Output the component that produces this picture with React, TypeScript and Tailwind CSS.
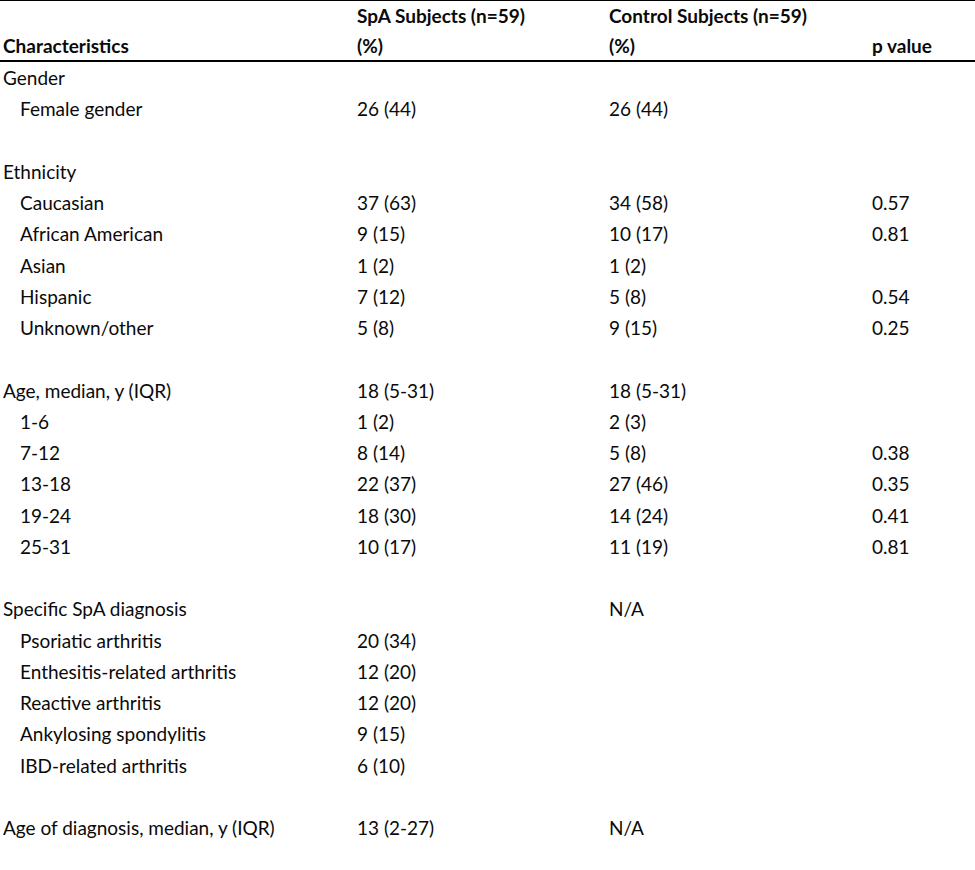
import React from "react";

type Row = { label: string; indent?: boolean; a?: string; b?: string; p?: string } | null;

const rows: Row[] = [
  { label: "Gender" },
  { label: "Female gender", indent: true, a: "26 (44)", b: "26 (44)" },
  null,
  { label: "Ethnicity" },
  { label: "Caucasian", indent: true, a: "37 (63)", b: "34 (58)", p: "0.57" },
  { label: "African American", indent: true, a: "9 (15)", b: "10 (17)", p: "0.81" },
  { label: "Asian", indent: true, a: "1 (2)", b: "1 (2)" },
  { label: "Hispanic", indent: true, a: "7 (12)", b: "5 (8)", p: "0.54" },
  { label: "Unknown/other", indent: true, a: "5 (8)", b: "9 (15)", p: "0.25" },
  null,
  { label: "Age, median, y (IQR)", a: "18 (5-31)", b: "18 (5-31)" },
  { label: "1-6", indent: true, a: "1 (2)", b: "2 (3)" },
  { label: "7-12", indent: true, a: "8 (14)", b: "5 (8)", p: "0.38" },
  { label: "13-18", indent: true, a: "22 (37)", b: "27 (46)", p: "0.35" },
  { label: "19-24", indent: true, a: "18 (30)", b: "14 (24)", p: "0.41" },
  { label: "25-31", indent: true, a: "10 (17)", b: "11 (19)", p: "0.81" },
  null,
  { label: "Specific SpA diagnosis", b: "N/A" },
  { label: "Psoriatic arthritis", indent: true, a: "20 (34)" },
  { label: "Enthesitis-related arthritis", indent: true, a: "12 (20)" },
  { label: "Reactive arthritis", indent: true, a: "12 (20)" },
  { label: "Ankylosing spondylitis", indent: true, a: "9 (15)" },
  { label: "IBD-related arthritis", indent: true, a: "6 (10)" },
  null,
  { label: "Age of diagnosis, median, y (IQR)", a: "13 (2-27)", b: "N/A" },
];

const grid = "grid grid-cols-[352px_252px_263px_1fr]";

export default function App() {
  return (
    <div
      className="w-[975px] min-h-[870px] bg-white text-[#0a0a0a] text-[19px]"
      style={{ fontFamily: "Lato, 'Liberation Sans', sans-serif" }}
    >
      <div className={`${grid} border-t border-black border-b-2 h-[62px] items-end pb-[5px] font-bold leading-[30px]`}>
        <div className="pl-[3px]">Characteristics</div>
        <div className="pl-[5px]">
          <div>SpA Subjects (n=59)</div>
          <div>(%)</div>
        </div>
        <div className="pl-[5px]">
          <div>Control Subjects (n=59)</div>
          <div>(%)</div>
        </div>
        <div className="pl-[5px]">p value</div>
      </div>
      <div className="flex flex-col">
        {rows.map((r, i) =>
          r ? (
            <div key={i} className={`${grid} h-[31.25px] items-center leading-none`}>
              <div className={r.indent ? "pl-[20px]" : "pl-[3px]"}>{r.label}</div>
              <div className="pl-[5px]">{r.a ?? ""}</div>
              <div className="pl-[5px]">{r.b ?? ""}</div>
              <div className="pl-[5px]">{r.p ?? ""}</div>
            </div>
          ) : (
            <div key={i} className="h-[31.25px]" />
          )
        )}
      </div>
    </div>
  );
}
